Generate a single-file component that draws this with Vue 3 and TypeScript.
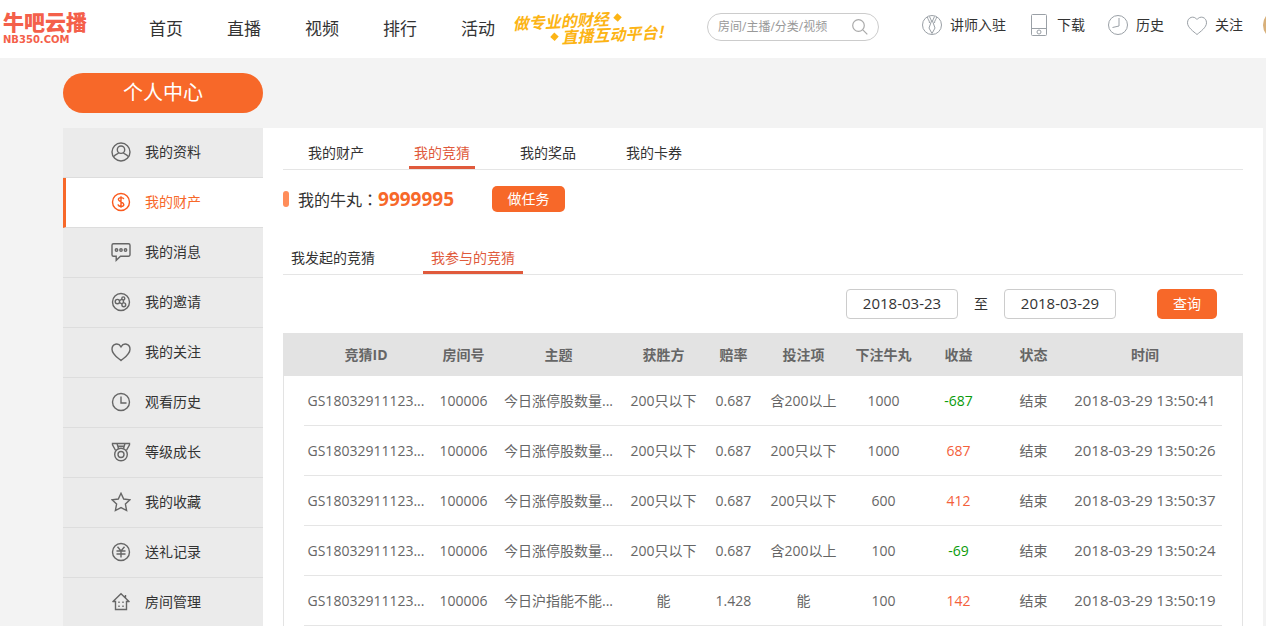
<script setup lang="ts">
import { ref } from 'vue'

interface Icon {
  paths: string[]
  circles?: [number, number, number][]
}

interface MenuItem {
  label: string
  icon: Icon
}

interface Guess {
  id: string
  room: string
  topic: string
  winner: string
  odds: string
  bet: string
  stake: string
  profit: number
  state: string
  time: string
}

const navItems = ['首页', '直播', '视频', '排行', '活动']

const tools: MenuItem[] = [
  {
    label: '讲师入驻',
    icon: {
      circles: [[11, 11, 9.5]],
      paths: ['M8.5 2.5l2 4.5h1l2-4.5M10.5 7L8 14l3 5.5 3-5.5L11.5 7M6.5 3c0 2.5 2 3 2 6M15.5 3c0 2.5-2 3-2 6'],
    },
  },
  {
    label: '下载',
    icon: {
      circles: [[11, 18, 2]],
      paths: ['M4.5 .5h13a1 1 0 0 1 1 1v19a1 1 0 0 1-1 1h-13a1 1 0 0 1-1-1v-19a1 1 0 0 1 1-1zM3.5 14.5h15'],
    },
  },
  {
    label: '历史',
    icon: { circles: [[11, 11, 9.5]], paths: ['M12 4v8l-6.5 1.5'] },
  },
  {
    label: '关注',
    icon: {
      paths: ['M11 20.5C7.5 17.5 1.5 13.5 1.5 8.8C1.5 3 8 1.3 11 5.5C14 1.3 20.5 3 20.5 8.8C20.5 13.5 14.5 17.5 11 20.5z'],
    },
  },
]

const menu: MenuItem[] = [
  {
    label: '我的资料',
    icon: {
      circles: [[10, 10, 9], [10, 7.7, 3.7]],
      paths: ['M7.6 10.6c-.2 1.6-3.6 1.4-4.6 4M12.4 10.6c.2 1.6 3.6 1.4 4.6 4'],
    },
  },
  {
    label: '我的财产',
    icon: {
      circles: [[10, 10, 8.5]],
      paths: ['M12.8 7.2C12.4 5.2 7.4 5 7.4 7.5c0 2.6 5.4 2 5.4 4.9 0 2.6-5.4 2.6-5.8 0M10 4.2v11.6'],
    },
  },
  {
    label: '我的消息',
    icon: {
      circles: [[5.5, 8, 1.2], [10, 8, 1.2], [14.5, 8, 1.2]],
      paths: ['M2.5 1.8h15a1.5 1.5 0 0 1 1.5 1.5v9.5a1.5 1.5 0 0 1-1.5 1.5H9.5l-4.3 4v-4H2.5A1.5 1.5 0 0 1 1 12.8V3.3a1.5 1.5 0 0 1 1.5-1.5z'],
    },
  },
  {
    label: '我的邀请',
    icon: {
      circles: [[10, 10, 8.5], [6.4, 9.6, 2.2], [12.3, 6.4, 1.5], [12.8, 12.8, 1.9]],
      paths: ['M8.4 8.6l2.6-1.4M8.4 10.7l2.7 1.2M12.4 8v2.9'],
    },
  },
  {
    label: '我的关注',
    icon: {
      paths: ['M10 18.5C7 15.8 1 12.5 1 7.2C1 1.6 7.3 .3 10 4.8C12.7 .3 19 1.6 19 7.2C19 12.5 13 15.8 10 18.5z'],
    },
  },
  {
    label: '观看历史',
    icon: { circles: [[10, 10, 8.5]], paths: ['M10 4.5V11h5.5'] },
  },
  {
    label: '等级成长',
    icon: {
      circles: [[10, 12.5, 6.3], [10, 12.5, 3]],
      paths: ['M4.6 8.5L1.5 2.8V1.5h17v1.3L15.4 8.5M6 1.5l1.5 5M14 1.5l-1.5 5M7 4.3h6'],
    },
  },
  {
    label: '我的收藏',
    icon: {
      paths: ['M10 1.3l2.7 5.7 6.2.8-4.5 4.3 1.2 6.4L10 15.6l-5.6 2.9 1.2-6.4L1.1 7.8 7.3 7z'],
    },
  },
  {
    label: '送礼记录',
    icon: {
      circles: [[10, 10, 8.5]],
      paths: ['M6.5 4.8L10 9l3.5-4.2M10 9v6.5M5.5 9h9M5.5 12h9'],
    },
  },
  {
    label: '房间管理',
    icon: {
      paths: ['M1.5 10L10 1.8l8.5 8.2M2 9.5h2.5v8h11v-8H18M14.5 3v2.5M8 9.5v1.5M12 9.5v1.5M8 13.5V15M12 13.5V15'],
    },
  },
]

const tabs = ['我的财产', '我的竞猜', '我的奖品', '我的卡券']
const subTabs = ['我发起的竞猜', '我参与的竞猜']

const columns = [
  { title: '竞猜ID', width: 124 },
  { title: '房间号', width: 71 },
  { title: '主题', width: 119 },
  { title: '获胜方', width: 91 },
  { title: '赔率', width: 49 },
  { title: '投注项', width: 91 },
  { title: '下注牛丸', width: 69 },
  { title: '收益', width: 81 },
  { title: '状态', width: 69 },
  { title: '时间', width: 154 },
]
const totalWidth = columns.reduce((sum, c) => sum + c.width, 0)

function row(topic: string, winner: string, odds: string, bet: string, stake: string, profit: number, clock: string): Guess {
  return {
    id: 'GS18032911123...',
    room: '100006',
    topic,
    winner,
    odds,
    bet,
    stake,
    profit,
    state: '结束',
    time: `2018-03-29 ${clock}`,
  }
}

const guesses: Guess[] = [
  row('今日涨停股数量...', '200只以下', '0.687', '含200以上', '1000', -687, '13:50:41'),
  row('今日涨停股数量...', '200只以下', '0.687', '200只以下', '1000', 687, '13:50:26'),
  row('今日涨停股数量...', '200只以下', '0.687', '200只以下', '600', 412, '13:50:37'),
  row('今日涨停股数量...', '200只以下', '0.687', '含200以上', '100', -69, '13:50:24'),
  row('今日沪指能不能...', '能', '1.428', '能', '100', 142, '13:50:19'),
]

const activeMenu = ref(1)
const activeTab = ref(1)
const activeSubTab = ref(1)
const keyword = ref('')
const dateFrom = ref('2018-03-23')
const dateTo = ref('2018-03-29')
</script>

<template>
  <div class="page" lang="zh-CN">
    <header class="topbar">
      <a class="logo" href="#">
        <span class="logo-name">牛吧云播</span>
        <span class="logo-domain">NB350.COM</span>
      </a>
      <nav class="nav">
        <a v-for="item in navItems" :key="item" href="#">{{ item }}</a>
      </nav>
      <div class="slogan">
        <div class="slogan-line">做专业的财经<i class="diamond"></i></div>
        <div class="slogan-line second"><i class="diamond"></i>直播互动平台!</div>
      </div>
      <form class="search" @submit.prevent>
        <input v-model="keyword" type="text" placeholder="房间/主播/分类/视频" aria-label="搜索" />
        <button type="submit" aria-label="搜索">
          <svg viewBox="0 0 16 16"><circle cx="6.5" cy="6.5" r="5.8" /><path d="M10.8 10.8L15.3 15.3" /></svg>
        </button>
      </form>
      <div class="tools">
        <a v-for="tool in tools" :key="tool.label" href="#">
          <svg viewBox="0 0 22 22">
            <circle v-for="(c, i) in tool.icon.circles" :key="i" :cx="c[0]" :cy="c[1]" :r="c[2]" />
            <path v-for="p in tool.icon.paths" :key="p" :d="p" />
          </svg>
          <span>{{ tool.label }}</span>
        </a>
        <a class="avatar" href="#" aria-label="头像"></a>
      </div>
    </header>

    <div class="body">
      <h1 class="title">个人中心</h1>
      <div class="columns">
        <nav class="side">
          <a
            v-for="(item, index) in menu"
            :key="item.label"
            href="#"
            :class="{ active: index === activeMenu }"
            @click.prevent="activeMenu = index"
          >
            <svg viewBox="0 0 20 20">
              <circle v-for="(c, i) in item.icon.circles" :key="i" :cx="c[0]" :cy="c[1]" :r="c[2]" />
              <path v-for="p in item.icon.paths" :key="p" :d="p" />
            </svg>
            <span>{{ item.label }}</span>
          </a>
        </nav>

        <main class="main">
          <div class="tabs">
            <button
              v-for="(tab, index) in tabs"
              :key="tab"
              type="button"
              :class="{ active: index === activeTab }"
              @click="activeTab = index"
            >{{ tab }}</button>
          </div>

          <div class="balance">
            <i class="marker"></i>
            <span>我的牛丸<span class="colon" lang="zh-TW">：</span></span>
            <strong>9999995</strong>
            <button class="primary task" type="button">做任务</button>
          </div>

          <div class="tabs sub">
            <button
              v-for="(tab, index) in subTabs"
              :key="tab"
              type="button"
              :class="{ active: index === activeSubTab }"
              @click="activeSubTab = index"
            >{{ tab }}</button>
          </div>

          <form class="filter" @submit.prevent>
            <input v-model="dateFrom" type="text" aria-label="开始日期" />
            <span>至</span>
            <input v-model="dateTo" type="text" aria-label="结束日期" />
            <button class="primary query" type="submit">查询</button>
          </form>

          <div class="table-box">
            <table>
              <colgroup>
                <col v-for="c in columns" :key="c.title" :style="{ width: (c.width / totalWidth) * 100 + '%' }" />
              </colgroup>
              <thead>
                <tr>
                  <th v-for="c in columns" :key="c.title" scope="col">{{ c.title }}</th>
                </tr>
              </thead>
              <tbody>
                <tr v-for="g in guesses" :key="g.time">
                  <td>{{ g.id }}</td>
                  <td>{{ g.room }}</td>
                  <td>{{ g.topic }}</td>
                  <td>{{ g.winner }}</td>
                  <td>{{ g.odds }}</td>
                  <td>{{ g.bet }}</td>
                  <td>{{ g.stake }}</td>
                  <td :class="g.profit < 0 ? 'loss' : 'gain'">{{ g.profit }}</td>
                  <td>{{ g.state }}</td>
                  <td class="time">{{ g.time }}</td>
                </tr>
              </tbody>
            </table>
          </div>
        </main>
      </div>
    </div>
  </div>
</template>

<style>
body {
  margin: 0;
  background: #f3f3f3;
}
</style>

<style scoped>
.page {
  height: 100vh;
  overflow: hidden;
  background: #f3f3f3;
  color: #333;
  font: 14px/20px "Open Sans", "Noto Sans CJK SC", sans-serif;
}

.page *,
.page *::before {
  box-sizing: border-box;
}

a {
  color: inherit;
  text-decoration: none;
}

button,
input {
  margin: 0;
  padding: 0;
  border: 0;
  background: none;
  color: inherit;
  font: inherit;
}

button {
  cursor: pointer;
}

svg {
  display: block;
  flex: none;
  fill: none;
  stroke: currentColor;
}

.topbar {
  display: flex;
  align-items: center;
  height: 58px;
  padding-left: 3px;
  overflow: hidden;
  background: #fff;
  white-space: nowrap;
}

.topbar > * {
  flex: none;
}

.logo {
  display: flex;
  flex-direction: column;
  gap: 4px;
  width: 86px;
  margin-bottom: 2px;
  color: #f4604a;
}

.logo-name {
  font: 900 21px/20px "Noto Sans CJK SC", sans-serif;
}

.logo-domain {
  font: bold 10px/10px "DejaVu Sans", sans-serif;
}

.nav {
  display: flex;
  gap: 44px;
  margin-left: 60px;
  font-size: 17px;
  line-height: 24px;
}

.slogan {
  width: 150px;
  margin: 0 0 4px 18px;
  color: #fcb415;
  font: italic bold 16px/16px "Noto Sans CJK SC", sans-serif;
  transform: rotate(-3deg);
}

.slogan-line {
  display: flex;
  align-items: center;
  gap: 6px;
}

.slogan-line.second {
  padding-left: 38px;
  gap: 4px;
}

.diamond {
  width: 6px;
  height: 6px;
  background: #fcb415;
  transform: rotate(45deg);
}

.search {
  display: flex;
  align-items: center;
  width: 172px;
  height: 28px;
  margin: 0 0 4px 44px;
  padding: 0 10px;
  border: 1px solid #ccc;
  border-radius: 14px;
}

.search input {
  flex: 1;
  min-width: 0;
  outline: none;
  font-size: 12px;
}

.search input::placeholder {
  color: #999;
  opacity: 1;
}

.search svg {
  width: 16px;
  height: 16px;
  color: #aaa;
  stroke-width: 1.2;
}

.tools {
  display: flex;
  align-items: center;
  gap: 22px;
  margin: 0 0 8px 42px;
}

.tools a {
  display: flex;
  flex: none;
  align-items: center;
  gap: 7px;
}

.tools svg {
  width: 22px;
  height: 22px;
  color: #9aa0a6;
}

.tools .avatar {
  width: 30px;
  height: 30px;
  margin-left: -2px;
  border-radius: 50%;
  background: #d8b07a;
}

.body {
  padding: 15px 3px 0 63px;
}

.title {
  width: 200px;
  margin: 0 0 15px;
  border-radius: 20px;
  background: #f76829;
  color: #fff;
  font-size: 20px;
  font-weight: 400;
  line-height: 40px;
  text-align: center;
}

.columns {
  display: grid;
  grid-template-columns: 200px 1fr;
}

.side a {
  display: flex;
  align-items: center;
  gap: 14px;
  height: 50px;
  padding: 0 0 2px 48px;
  border-bottom: 1px solid #ddd;
  background: #ebebeb;
}

.side svg {
  width: 20px;
  height: 20px;
  color: #666;
  stroke-width: 1.4;
}

.side .active {
  padding-left: 45px;
  border-left: 3px solid #f76829;
  background: #fff;
  color: #f76829;
}

.side .active svg {
  color: #fa5a1e;
}

.main {
  min-width: 0;
  padding: 0 20px;
  background: #fff;
}

.tabs {
  display: flex;
  gap: 40px;
  height: 42px;
  padding-left: 20px;
  border-bottom: 1px solid #e5e5e5;
}

.tabs button {
  width: 66px;
  padding-top: 12px;
  border-bottom: 3px solid transparent;
}

.tabs .active {
  border-bottom-color: #e05a3c;
  color: #e05a3c;
}

.sub {
  padding-left: 0;
}

.sub button {
  width: 100px;
}

.balance {
  display: flex;
  align-items: center;
  height: 58px;
  margin-bottom: 5px;
  font-size: 16px;
}

.marker {
  width: 6px;
  height: 16px;
  margin-right: 9px;
  border-radius: 3px;
  background: #ff8d5a;
}

.colon {
  font-family: "Noto Sans CJK TC", sans-serif;
}

.balance strong {
  color: #f76829;
  font-size: 19px;
}

.primary {
  border-radius: 5px;
  background: #f76829;
  color: #fff;
  font-size: 14px;
}

.task {
  width: 73px;
  height: 26px;
  margin-left: 38px;
}

.filter {
  display: flex;
  align-items: center;
  justify-content: flex-end;
  gap: 16px;
  padding: 14px 26px 14px 0;
}

.filter input {
  width: 112px;
  height: 30px;
  padding-bottom: 2px;
  border: 1px solid #ccc;
  border-radius: 4px;
  font-size: 15px;
  text-align: center;
}

.query {
  width: 60px;
  height: 30px;
  margin-left: 25px;
}

.table-box {
  padding: 0 20px;
  border: solid #e3e3e3;
  border-width: 0 1px;
  color: #666;
}

table {
  width: 100%;
  border-spacing: 0;
  table-layout: fixed;
}

th,
td {
  padding: 0;
  text-align: center;
  white-space: nowrap;
}

th {
  height: 43px;
  background: #e3e3e3;
}

th:first-child {
  box-shadow: -21px 0 #e3e3e3;
}

th:last-child {
  box-shadow: 21px 0 #e3e3e3;
}

td {
  height: 50px;
  border-bottom: 1px solid #e5e5e5;
}

.time {
  padding-bottom: 2px;
  font-size: 15px;
}

.loss {
  color: #0a9b0a;
}

.gain {
  color: #f4603a;
}
</style>
